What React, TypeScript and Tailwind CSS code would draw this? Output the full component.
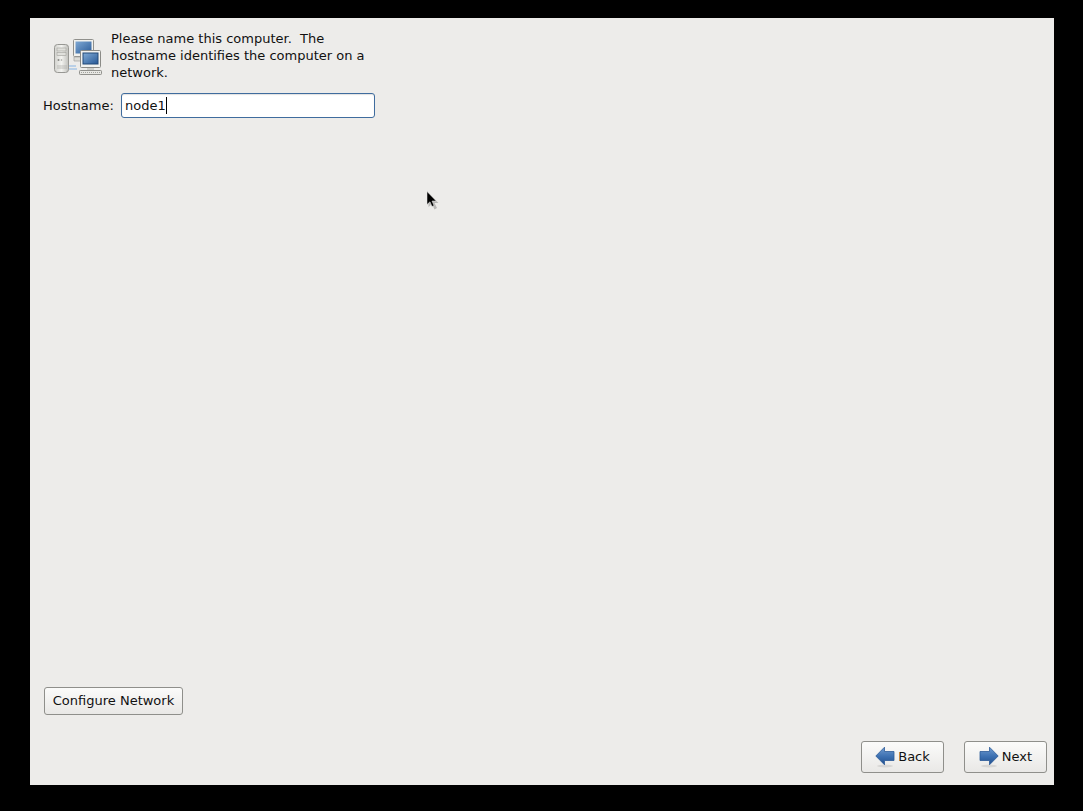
const FONT = "font-['DejaVu_Sans',sans-serif]";

function ComputersIcon() {
  return (
    <svg width="50" height="38" viewBox="0 0 50 38" className="mt-[2px] shrink-0">
      <defs>
        <linearGradient id="tower" x1="0" y1="0" x2="1" y2="0">
          <stop offset="0" stopColor="#d2d2ce" />
          <stop offset="0.5" stopColor="#f3f3f0" />
          <stop offset="1" stopColor="#c0c0bc" />
        </linearGradient>
        <linearGradient id="screen" x1="0" y1="0" x2="1" y2="1">
          <stop offset="0" stopColor="#7ea8d4" />
          <stop offset="1" stopColor="#2a5b98" />
        </linearGradient>
      </defs>
      {/* network link */}
      <path d="M15 28h8M15 31h9" stroke="#a9c6e6" strokeWidth="1.4" fill="none" />
      {/* tower */}
      <rect x="1.5" y="6.5" width="14" height="28" rx="3" fill="url(#tower)" stroke="#979793" />
      <rect x="4" y="10" width="9" height="3" fill="#e0e0dc" stroke="#a0a09c" strokeWidth="0.6" />
      <rect x="4" y="14.5" width="9" height="3" fill="#e0e0dc" stroke="#a0a09c" strokeWidth="0.6" />
      <circle cx="5.5" cy="22" r="1" fill="#8a8a86" />
      <circle cx="8.5" cy="22" r="0.8" fill="#a2a29e" />
      <path d="M5 27v4M7 27v4M9 27v4M11 27v4M13 27v4" stroke="#b0b0ac" strokeWidth="0.8" />
      {/* back monitor */}
      <rect x="20.5" y="1.5" width="20" height="17" rx="1" fill="#f1f1ee" stroke="#90908c" />
      <rect x="22.5" y="3.5" width="16" height="12" fill="url(#screen)" />
      <path d="M21 19h9v4h-9z" fill="#dcdcd8" stroke="#a2a29e" strokeWidth="0.7" />
      {/* front monitor */}
      <rect x="27.5" y="12.5" width="20" height="17" rx="1" fill="#f3f3f0" stroke="#8b8b87" />
      <rect x="29.5" y="14.5" width="16" height="12" fill="#234a78" />
      <rect x="30.5" y="15.5" width="14" height="10" fill="url(#screen)" />
      <path d="M34 30h7v2h-7z" fill="#cfcfcb" />
      <rect x="26.5" y="32.5" width="22" height="4" rx="0.8" fill="#e8e8e4" stroke="#90908c" />
      <path d="M28 34.5h19" stroke="#a2a29e" strokeWidth="1" strokeDasharray="1 1" />
    </svg>
  );
}

function ArrowIcon({ dir }: { dir: "left" | "right" }) {
  return (
    <svg width="20" height="22" viewBox="0 0 20 22" className={dir === "left" ? "" : "-scale-x-100"}>
      <defs>
        <linearGradient id={`arrow-${dir}`} x1="0" y1="0" x2="0" y2="1">
          <stop offset="0" stopColor="#6f9bd0" />
          <stop offset="0.55" stopColor="#3b6fb0" />
          <stop offset="1" stopColor="#234f8c" />
        </linearGradient>
      </defs>
      <ellipse cx="10" cy="20" rx="8" ry="1.5" fill="#000" opacity="0.09" />
      <path d="M0.8 10L9.5 1.2V5.5H19V14.5H9.5V18.8Z" fill={`url(#arrow-${dir})`} stroke="#2c5a98" strokeWidth="0.8" strokeLinejoin="round" />
    </svg>
  );
}

const btn =
  "flex items-center justify-center rounded-[3px] border border-[#8f8f8b] bg-gradient-to-b from-[#fbfbfa] to-[#e9e8e6] text-[13px] text-[#111111]";

export default function App() {
  return (
    <div className={`relative h-[811px] w-[1083px] overflow-hidden bg-black pt-[18px] pr-[29px] pb-[26px] pl-[30px] ${FONT}`}>
      <div className="flex h-full flex-col bg-[#edecea] text-[13px] text-[#111111]">
        {/* Header */}
        <div className="flex items-center pt-[12px] pl-[23px]">
          <ComputersIcon />
          <p className="ml-[8px] w-[256px] whitespace-pre-wrap leading-[17px]">
            {"Please name this computer.  The hostname identifies the computer on a network."}
          </p>
        </div>

        {/* Hostname row */}
        <div className="mt-[12px] flex items-center pl-[13px]">
          <label className="w-[78px] whitespace-nowrap">Hostname:</label>
          <div className="flex h-[25px] w-[254px] items-center rounded-[3px] border border-[#3f6c9e] bg-white pl-[3px] shadow-[inset_0_1px_1px_rgba(0,0,0,0.12)]">
            <span>node1</span>
            <span className="h-[17px] w-px bg-black" />
          </div>
        </div>

        <div className="flex-1" />

        <div className="pl-[14px]">
          <button className={`${btn} h-[28px] w-[139px] pb-[1px]`}>Configure Network</button>
        </div>

        {/* Nav buttons */}
        <div className="mt-[26px] mb-[12px] flex justify-end gap-[20px] pr-[7px]">
          <button className={`${btn} h-[32px] w-[83px] gap-[3px] pb-[1px]`}>
            <ArrowIcon dir="left" />
            Back
          </button>
          <button className={`${btn} h-[32px] w-[83px] gap-[3px] border-[#6f93bd] pb-[1px]`}>
            <ArrowIcon dir="right" />
            Next
          </button>
        </div>
      </div>

      {/* Mouse pointer */}
      <svg width="14" height="20" viewBox="0 0 14 20" className="absolute top-[191px] left-[426px]">
        <path d="M2.5 2.5V16L6 13L8.5 18.5L11 17L8.5 12H12.5Z" fill="#000" opacity="0.22" />
        <path d="M1 0.5V13.5L4 10.8L6 15.5L8 14.6L6 10H10.2Z" fill="#000" stroke="#e8e8e8" strokeWidth="0.5" />
      </svg>
    </div>
  );
}
